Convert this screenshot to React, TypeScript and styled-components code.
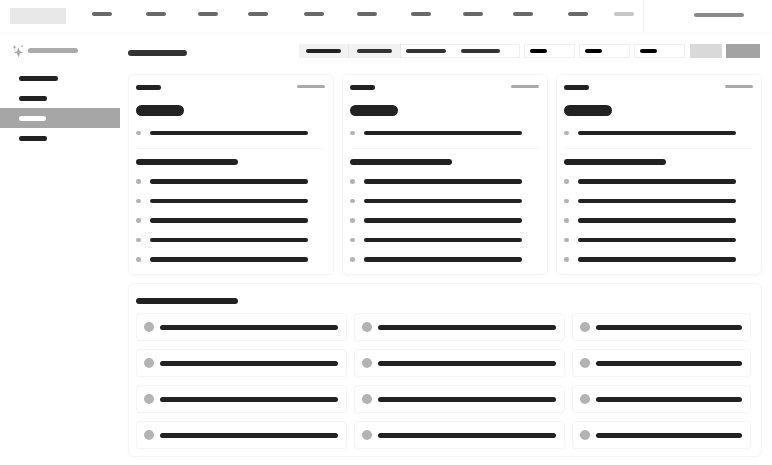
import React from "react";
import styled, { createGlobalStyle } from "styled-components";

const Global = createGlobalStyle`
  html, body { margin: 0; padding: 0; background: #fff; }
  body { font-family: "Liberation Sans", Arial, sans-serif; overflow: hidden; }
`;

const Page = styled.div`
  width: 772px;
  height: 465px;
  display: flex;
  flex-direction: column;
  overflow: hidden;
`;

const Bar = styled.span<{ $w: number; $h?: number; $c?: string }>`
  display: block;
  flex: none;
  width: ${(p) => p.$w}px;
  height: ${(p) => p.$h ?? 4.5}px;
  background: ${(p) => p.$c ?? "#222"};
  border-radius: ${(p) => (p.$h ?? 4.5) / 2}px;
`;

const Header = styled.header`
  height: 32px;
  flex: none;
  display: flex;
  background: #fff;
  box-shadow: 0 1px 5px rgba(0, 0, 0, 0.035);
`;

const Nav = styled.nav`
  width: 643px;
  display: flex;
  align-items: center;
  padding-left: 10px;
  box-sizing: border-box;
`;

const Logo = styled.div`
  width: 56px;
  height: 16px;
  background: #e8e8e8;
`;

const NavItem = styled.span<{ $gap: number; $muted?: boolean }>`
  display: block;
  width: 20px;
  height: 4px;
  margin: -4px 0 0 ${(p) => p.$gap}px;
  border-radius: 2px;
  background: ${(p) => (p.$muted ? "#c6c6c6" : "#696969")};
`;

const Account = styled.div`
  flex: 1;
  border-left: 1px solid #f8f8f8;
  display: flex;
  align-items: center;
  padding: 0 0 2px 50px;
`;

const Body = styled.div`
  flex: 1;
  display: flex;
  min-height: 0;
`;

const Sidebar = styled.aside`
  width: 120px;
  flex: none;
`;

const Brand = styled.div`
  height: 36px;
  box-sizing: border-box;
  display: flex;
  align-items: center;
  gap: 4px;
  padding: 1px 0 0 12px;
  svg { display: block; }
`;

const SideRow = styled.div<{ $active?: boolean }>`
  height: 20px;
  box-sizing: border-box;
  display: flex;
  align-items: center;
  padding: 1px 0 0 19px;
  background: ${(p) => (p.$active ? "#a6a6a6" : "transparent")};
`;

const Main = styled.main`
  flex: 1;
  min-width: 0;
  padding: 12px 10px 0 8px;
`;

const Toolbar = styled.div`
  display: flex;
  height: 14px;
  margin-bottom: 16px;
  padding-right: 2px;
`;

const Title = styled.div`
  margin-top: 5.5px;
`;

const Controls = styled.div`
  margin-left: auto;
  display: flex;
  align-items: stretch;
`;

const Segments = styled.div`
  display: flex;
  margin-right: 3.5px;
`;

const Tab = styled.div<{ $w: number }>`
  width: ${(p) => p.$w}px;
  background: #f2f2f2;
  box-sizing: border-box;
  border-right: 1px solid #e6e6e6;
  padding-bottom: 1px;
  display: flex;
  align-items: center;
  justify-content: center;
`;

const PlainTabs = styled.div`
  width: 119.5px;
  box-sizing: border-box;
  border: 1px solid #f0f0f0;
  border-left: none;
  display: flex;
  align-items: center;
  gap: 15px;
  padding: 0 0 1px 5.5px;
`;

const DateField = styled.div`
  width: 51.5px;
  box-sizing: border-box;
  border: 1px solid #f0f0f0;
  display: flex;
  align-items: center;
  padding: 0 0 1px 5.5px;
  margin-right: 3.5px;
`;

const Action = styled.div<{ $w: number; $c: string; $gap?: number }>`
  width: ${(p) => p.$w}px;
  background: ${(p) => p.$c};
  margin-left: ${(p) => p.$gap ?? 0}px;
`;

const Cards = styled.div`
  display: grid;
  grid-template-columns: repeat(3, 1fr);
  gap: 8px;
  margin-bottom: 8px;
`;

const Card = styled.section`
  box-sizing: border-box;
  height: 201px;
  border: 1px solid #f5f5f5;
  border-radius: 6px;
  padding: 10px 7px 0;
  background: #fff;
  box-shadow: 0 1px 4px rgba(0, 0, 0, 0.025);
`;

const CardHead = styled.div`
  display: flex;
  justify-content: space-between;
  align-items: flex-start;
`;

const Period = styled.div`
  margin: -0.5px 1px 0 0;
`;

const Amount = styled.div`
  margin-top: 15px;
`;

const BulletRow = styled.div<{ $top?: number }>`
  display: flex;
  align-items: center;
  gap: 10px;
  margin-top: ${(p) => p.$top ?? 0}px;
`;

const Dot = styled.span`
  width: 4.5px;
  height: 4.5px;
  margin-right: -0.5px;
  border-radius: 50%;
  background: #b3b3b3;
  flex: none;
`;

const Divider = styled.hr`
  border: none;
  height: 1px;
  background: #f3f3f3;
  margin: 12.5px 2px 0 1.5px;
`;

const SectionTitle = styled.div<{ $top?: number }>`
  margin-top: ${(p) => p.$top ?? 0}px;
`;

const BulletList = styled.div`
  display: flex;
  flex-direction: column;
  gap: 15px;
  margin-top: 14.75px;
`;

const Panel = styled.section`
  box-sizing: border-box;
  height: 174px;
  border: 1px solid #f5f5f5;
  border-radius: 6px;
  padding: 14px 7px 0;
  background: #fff;
  box-shadow: 0 1px 4px rgba(0, 0, 0, 0.025);
`;

const FeatureGrid = styled.div`
  display: grid;
  grid-template-columns: 211px 211px 179px;
  grid-auto-rows: 28px;
  gap: 8px 7px;
  margin-top: 9px;
`;

const Feature = styled.div`
  box-sizing: border-box;
  border: 1px solid #f5f5f5;
  border-radius: 4px;
  display: flex;
  align-items: center;
  gap: 6px;
  padding-left: 7px;
  background: #fff;
  box-shadow: 0 1px 3px rgba(0, 0, 0, 0.025);
`;

const Avatar = styled.span`
  width: 10px;
  height: 10px;
  border-radius: 50%;
  background: #b3b3b3;
  flex: none;
`;

const navGaps = [25.5, 34, 32.5, 29.5, 36, 33, 34, 32.5, 29.5, 35.5, 25.5];

const Sparkle = () => (
  <svg width="12" height="14" viewBox="0 0 12 14" fill="#a8a8a8" aria-hidden="true">
    <path d="M6.5 3.6 L7.9 7.3 L11.2 8.4 L7.9 9.5 L6.5 13.4 L5.1 9.5 L1.8 8.4 L5.1 7.3 Z" />
    <path d="M2.5 1 L3.1 2.6 L4.6 3.2 L3.1 3.8 L2.5 5.4 L1.9 3.8 L.4 3.2 L1.9 2.6 Z" />
    <path d="M9.9 1 L10.3 1.8 L11.2 2.2 L10.3 2.6 L9.9 3.4 L9.5 2.6 L8.6 2.2 L9.5 1.8 Z" />
  </svg>
);

const SummaryCard = () => (
  <Card>
    <CardHead>
      <Bar $w={25} />
      <Period>
        <Bar $w={28.5} $h={3} $c="#aaa" />
      </Period>
    </CardHead>
    <Amount>
      <Bar $w={48} $h={11} />
    </Amount>
    <BulletRow $top={15}>
      <Dot />
      <Bar $w={157.5} />
    </BulletRow>
    <Divider />
    <SectionTitle $top={10}>
      <Bar $w={102} $h={6} />
    </SectionTitle>
    <BulletList>
      {[0, 1, 2, 3, 4].map((i) => (
        <BulletRow key={i}>
          <Dot />
          <Bar $w={157.5} />
        </BulletRow>
      ))}
    </BulletList>
  </Card>
);

export default function App() {
  return (
    <Page>
      <Global />
      <Header>
        <Nav>
          <Logo />
          {navGaps.map((g, i) => (
            <NavItem key={i} $gap={g} $muted={i === navGaps.length - 1} />
          ))}
        </Nav>
        <Account>
          <Bar $w={49.5} $h={4} $c="#8a8a8a" />
        </Account>
      </Header>
      <Body>
        <Sidebar>
          <Brand>
            <Sparkle />
            <Bar $w={50} $h={5} $c="#aaa" />
          </Brand>
          <SideRow>
            <Bar $w={38.5} />
          </SideRow>
          <SideRow>
            <Bar $w={28} />
          </SideRow>
          <SideRow $active>
            <Bar $w={26.5} $c="#fff" />
          </SideRow>
          <SideRow>
            <Bar $w={28} />
          </SideRow>
        </Sidebar>
        <Main>
          <Toolbar>
            <Title>
              <Bar $w={58.5} $h={6.5} $c="#333" />
            </Title>
            <Controls>
              <Segments>
                <Tab $w={50}>
                  <Bar $w={34.5} $h={4} />
                </Tab>
                <Tab $w={51.5}>
                  <Bar $w={34.5} $h={4} $c="#333" />
                </Tab>
                <PlainTabs>
                  <Bar $w={40} $h={4} $c="#333" />
                  <Bar $w={39} $h={4} $c="#333" />
                </PlainTabs>
              </Segments>
              {[0, 1, 2].map((i) => (
                <DateField key={i}>
                  <Bar $w={16.5} $h={4} $c="#000" />
                </DateField>
              ))}
              <Action $w={32.5} $c="#d9d9d9" $gap={1} />
              <Action $w={34} $c="#a3a3a3" $gap={4} />
            </Controls>
          </Toolbar>
          <Cards>
            <SummaryCard />
            <SummaryCard />
            <SummaryCard />
          </Cards>
          <Panel>
            <Bar $w={102} $h={6} />
            <FeatureGrid>
              {Array.from({ length: 12 }).map((_, i) => (
                <Feature key={i}>
                  <Avatar />
                  <Bar $w={i % 3 === 2 ? 146 : 178} $h={5} />
                </Feature>
              ))}
            </FeatureGrid>
          </Panel>
        </Main>
      </Body>
    </Page>
  );
}
